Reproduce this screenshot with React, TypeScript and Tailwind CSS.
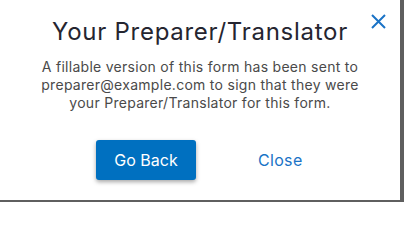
import React from 'react';

const font = { fontFamily: 'Inter, "Open Sans", sans-serif' };

export default function App() {
  return (
    <div className="w-[404px] h-[202px] bg-[#5f5f5f] overflow-hidden" style={font}>
      <div className="relative w-[400px] h-[200px] bg-white flex flex-col items-center">
        <button className="absolute left-[371px] top-[14px] w-[15px] h-[15px] text-[#1a73c6]" aria-label="Close dialog">
          <svg viewBox="0 0 15 15" width="15" height="15" fill="none" stroke="currentColor" strokeWidth="2">
            <path d="M1 1 L14 14 M14 1 L1 14" />
          </svg>
        </button>

        <h2 className="mt-4 text-[24px] leading-8 font-normal text-[#252530] tracking-[0.03em]">
          Your Preparer/Translator
        </h2>

        <p className="mt-[10px] text-center text-[14px] leading-[18px] text-[#4a4a4a] tracking-[0.02em] whitespace-nowrap">
          A fillable version of this form has been sent to
          <br />
          preparer@example.com to sign that they were
          <br />
          your Preparer/Translator for this form.
        </p>

        <div className="mt-[28px] w-full flex items-center pl-[96px]">
          <button className="w-[100px] h-[40px] rounded-[3px] bg-[#0070c0] text-white text-[16px] shadow-[0_2px_4px_rgba(0,0,0,0.35)]">
            Go Back
          </button>
          <button className="ml-[62px] text-[16px] tracking-[0.02em] text-[#1a73c6]">Close</button>
        </div>
      </div>
    </div>
  );
}
